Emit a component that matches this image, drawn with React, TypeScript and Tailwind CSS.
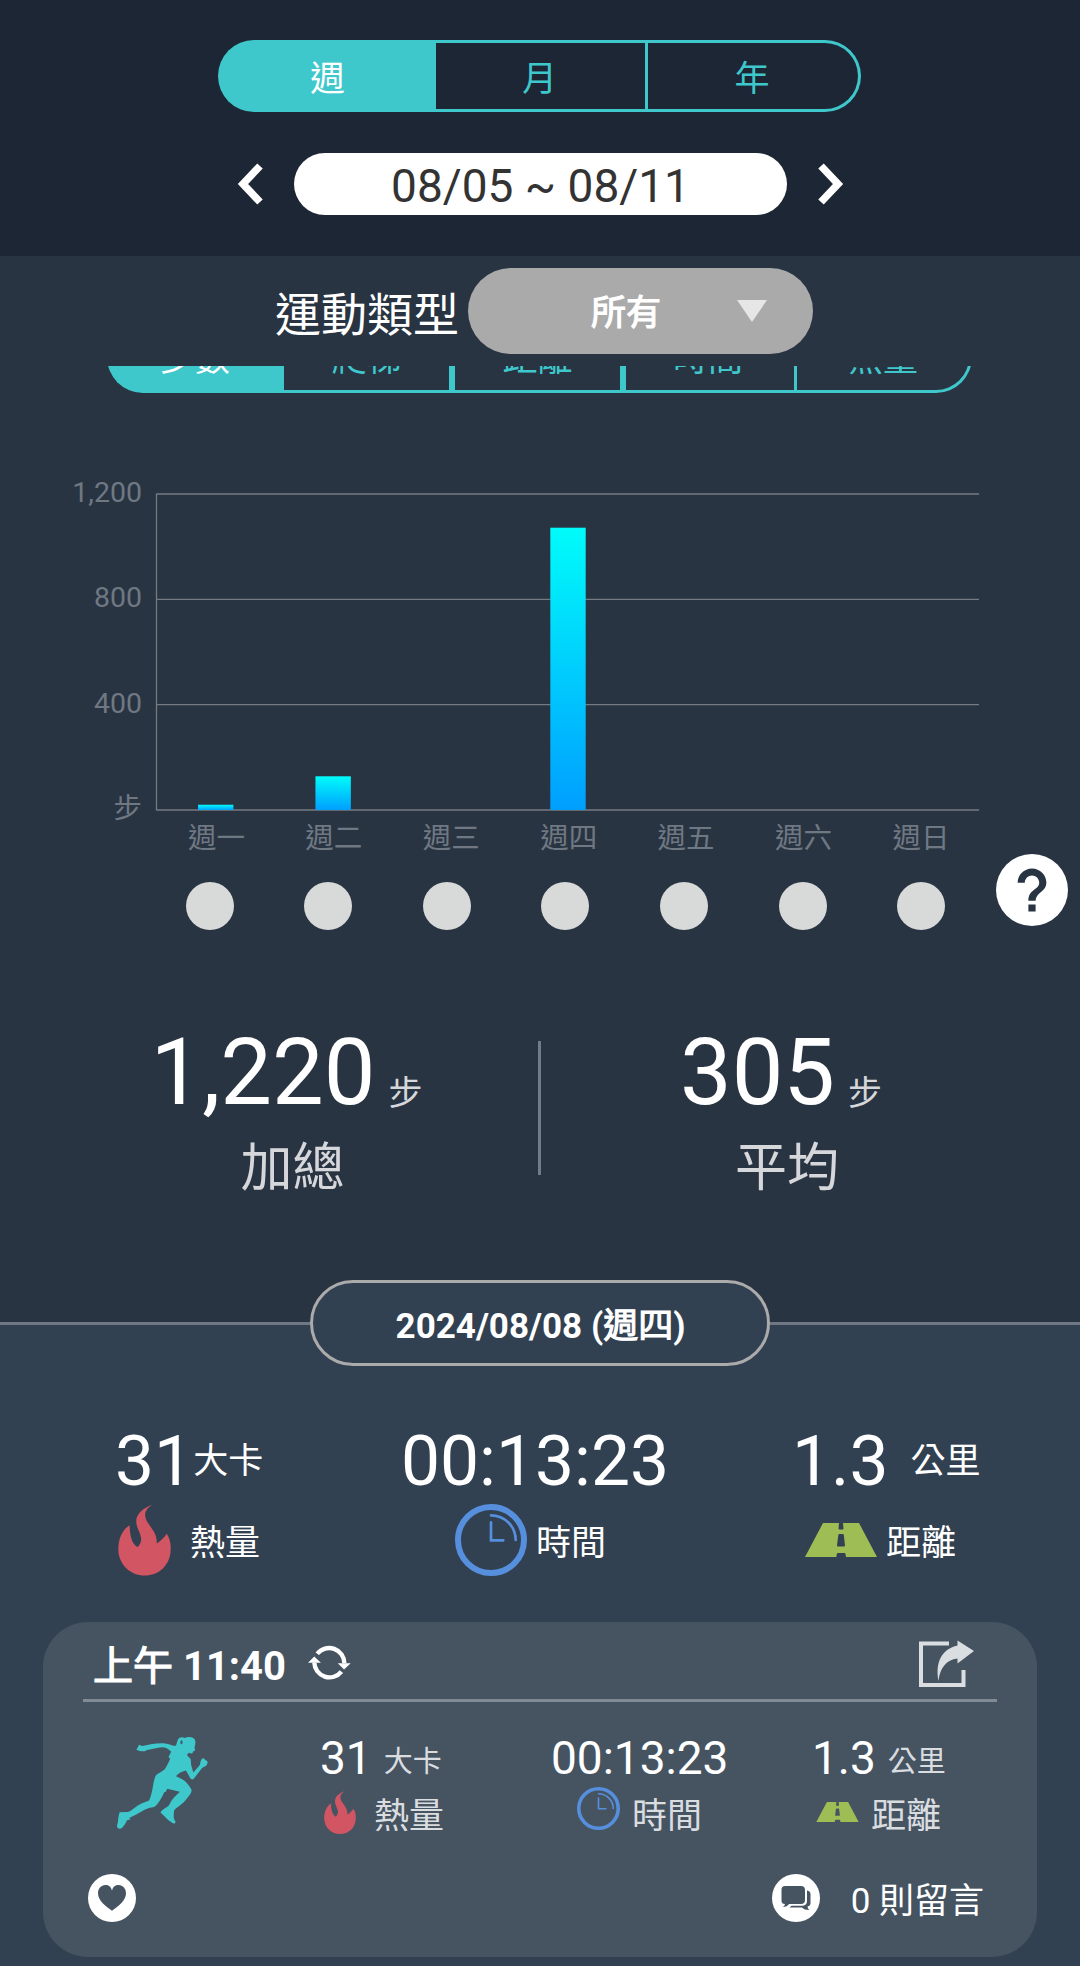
import { useState } from 'react';
import clsx from 'clsx';

const PERIODS = ['週', '月', '年'];
const METRICS = ['步數', '爬梯', '距離', '時間', '熱量'];

const WEEK = [
  { day: '週一', steps: 20 },
  { day: '週二', steps: 128 },
  { day: '週三', steps: 0 },
  { day: '週四', steps: 1072 },
  { day: '週五', steps: 0 },
  { day: '週六', steps: 0 },
  { day: '週日', steps: 0 },
];

const MAX_STEPS = 1200;
const CHART = { left: 157, right: 979, top: 75, bottom: 391 };

function Chevron({ flip }: { flip?: boolean }) {
  return (
    <svg width="26" height="42" viewBox="0 0 26 42" className={clsx('shrink-0', flip && '-scale-x-100')}>
      <path d="M23 3 6 21l17 18" fill="none" stroke="#fff" strokeWidth="7.5" />
    </svg>
  );
}

function FlameIcon({ className }: { className?: string }) {
  return (
    <svg viewBox="114 283 160 215" className={className} fill="#d15563">
      <path d="M218 283C196 292 169 308 169 333C169 355 183 368 184 388C184 398 178 407 173 412C160 404 150 388 149 346C128 358 114 388 115 420C116 465 152 498 194 498C238 498 272 466 273 420C274 400 270 385 261 372C253 385 242 394 231 401C232 380 225 368 213 351C200 333 196 326 196 313C196 302 206 291 218 283Z" />
    </svg>
  );
}

function ClockIcon({ className }: { className?: string }) {
  return (
    <svg viewBox="0 0 216 216" className={className} fill="none" stroke="#568fde" strokeWidth="8" strokeLinecap="round">
      <circle cx="108" cy="108" r="99" strokeWidth="18" />
      <path d="M108 34A74 74 0 0 1 182 108M108 55V109H145" />
    </svg>
  );
}

function RoadIcon({ className }: { className?: string }) {
  return (
    <svg viewBox="0 0 72 34" className={className} fill="#9fbd55" fillRule="evenodd">
      <path d="M18 0H34L33.5 5.5Q33.5 6.5 34.5 6.5H37.5Q38.5 6.5 38.5 5.5L38 0H54L72 34H41L40.5 31Q40.3 30 39.5 30H33Q32 30 31.8 31L31.3 34H0ZM34.5 11Q33.5 11 33.3 12L32 22.5Q32 23.5 33 23.5H39Q40 23.5 40 22.5L38.8 12Q38.6 11 37.6 11Z" />
    </svg>
  );
}

function RunnerIcon() {
  return (
    <svg width="91" height="92" viewBox="262 380 272 275" fill="#3fc8cc" fillRule="evenodd">
      <path d="M320 418L328 403L337 407C362 402 380 398 400 399C415 400 425 406 436 407C441 404 440 396 444 388C448 381 457 379 464 383C474 379 488 379 494 387C499 396 495 405 494 411L495 421L489 423C489 429 484 431 479 427C475 428 471 432 472 435L482 446C484 456 482 463 486 472L490 486C495 481 503 472 510 463C511 454 513 446 518 444C523 443 524 447 526 449L533 453C533 461 529 467 523 469C518 471 516 472 514 476L496 499C493 504 490 507 487 507C483 507 480 502 478 497L468 480C455 483 446 488 438 497C452 502 468 512 475 523C480 530 485 535 485 541C484 549 477 557 470 565C459 579 446 587 436 595C432 599 432 603 432 608C431 618 431 624 437 633C437 638 432 639 429 638L416 629L392 606C394 601 398 598 402 595C410 590 416 588 419 581C424 568 438 556 450 544L412 535L408 544L403 545C399 556 392 567 385 577C380 584 376 588 370 590C356 592 346 596 338 601C325 609 311 616 298 622L303 626L292 629C289 637 282 646 276 653C272 655 266 655 264 652C260 646 263 640 265 634C265 624 267 614 270 605L294 604C301 603 307 597 314 592C327 582 343 575 358 570C365 554 367 540 370 524C372 511 375 502 378 495C386 487 396 484 404 477C412 466 416 456 421 445L416 440L424 424C415 415 407 411 397 411C381 413 367 417 352 419C345 424 335 424 320 418ZM453 391C450 396 452 402 456 402C458 398 459 393 456 390Z" />
    </svg>
  );
}

function SyncIcon() {
  return (
    <svg width="43" height="36" viewBox="834 105 130 108" fill="none" stroke="#fff" strokeWidth="13">
      <path d="M862 131A46 46 0 0 1 944 160M935 185A46 46 0 0 1 853 158" />
      <path d="M924 160H963L943 179ZM834 158H873L853 139Z" fill="#fff" stroke="none" />
    </svg>
  );
}

function ShareIcon() {
  return (
    <svg width="56" height="48" viewBox="919 1640 56 48">
      <path d="M949 1643.5H921V1685H963.5V1670" fill="none" stroke="#dadee0" strokeWidth="4" />
      <path
        d="M957.5 1640.5L974 1651L957.5 1663.5V1658.5C946 1660 940 1668 938.5 1681C935 1662 942 1649 957.5 1645.5Z"
        fill="#dadee0"
      />
    </svg>
  );
}

function HeartBadge() {
  return (
    <svg width="48" height="48" viewBox="174 792 144 144">
      <circle cx="246" cy="864" r="72" fill="#fff" />
      <path
        d="M246 902C228 890 204 872 204 850C204 836 213 825 226 825C236 825 243 830 246 842C249 830 256 825 266 825C279 825 288 836 288 850C288 872 264 890 246 902Z"
        fill="#465462"
      />
    </svg>
  );
}

function CommentBadge() {
  return (
    <svg width="48" height="48" viewBox="0 0 48 48">
      <circle cx="24" cy="24" r="24" fill="#fff" />
      <path
        d="M13 12H29Q33 12 33 16V26Q33 30 29 30H17Q15 33 11 33Q13 31.500 13 30Q9.500 30 9.500 26.500V15.500Q9.500 12 13 12Z"
        fill="#465462"
      />
      <path
        d="M35 16.500Q38.500 17 38.500 20V29Q38.500 32 35.500 32.500Q35.500 34.500 37.500 36Q32 36 30 33.500H17.500L19.500 31.800H30Q35 31.800 35 27Z"
        fill="#465462"
      />
    </svg>
  );
}

function WeekChart() {
  const slot = (CHART.right - CHART.left) / WEEK.length;
  const scale = (CHART.bottom - CHART.top) / MAX_STEPS;
  const toY = (value: number) => CHART.bottom - value * scale;

  return (
    <svg width="1080" height="444" viewBox="0 0 1080 444" fontSize="28.5" fill="#6f7882">
      <defs>
        <linearGradient id="bar" x1="0" y1="0" x2="0" y2="1">
          <stop offset="0" stopColor="#00fcfa" />
          <stop offset="1" stopColor="#009fff" />
        </linearGradient>
      </defs>
      {[1200, 800, 400, 0].map((v) => (
        <g key={v}>
          <line x1="156" x2={CHART.right} y1={toY(v)} y2={toY(v)} stroke="#757a80" strokeWidth="1.3" />
          <text x="142" y={v ? toY(v) + 8 : 399} textAnchor="end">
            {v ? v.toLocaleString('en-US') : '步'}
          </text>
        </g>
      ))}
      <line x1="156.500" x2="156.500" y1={CHART.top} y2={CHART.bottom} stroke="#757a80" strokeWidth="1.3" />
      {WEEK.map((d, i) => {
        const center = CHART.left + slot * (i + 0.5);
        return (
          <g key={d.day}>
            {d.steps > 0 && (
              <rect x={center - 17.700} y={toY(d.steps)} width="35.400" height={d.steps * scale} fill="url(#bar)" />
            )}
            <text x={center + 0.7} y="429" textAnchor="middle">
              {d.day}
            </text>
          </g>
        );
      })}
    </svg>
  );
}

function Total({ value, label }: { value: string; label: string }) {
  return (
    <div className="flex flex-col items-center">
      <div className="flex h-[92px] items-baseline leading-[92px]">
        <span className="text-[92px]">{value}</span>
        <span className="relative top-px ml-[13px] text-[34px] text-[#d6d7da]">步</span>
      </div>
      <span className="mt-6 ml-3 text-[52px] leading-[52px] text-[#d6d7da]">{label}</span>
    </div>
  );
}

export default function App() {
  const [period, setPeriod] = useState(0);
  const [metric, setMetric] = useState(0);

  return (
    <div className="h-[1966px] w-[1080px] overflow-hidden bg-[#293442] font-[Roboto,'Noto_Sans_CJK_TC',sans-serif] whitespace-nowrap text-white">
      {/* Period + date range */}
      <header className="h-64 bg-[#1d2634] pt-10">
        <div className="ml-[218px] flex h-[72px] w-[643px] text-[35px]">
          {PERIODS.map((p, i) => (
            <button
              key={p}
              onClick={() => setPeriod(i)}
              className={clsx(
                'border-y-[3px] border-[#3fc8cc] pt-[7px] leading-[59px]',
                i === 0 && 'w-[218px] rounded-l-full border-l-[3px] pr-0.5',
                i === 1 && 'w-[212px] border-r-[3px] pr-0.5',
                i === 2 && 'w-[213px] rounded-r-full border-r-[3px] pr-0.5',
                period === i ? 'bg-[#3fc8cc] text-white' : 'text-[#3fc8cc]',
              )}
            >
              {p}
            </button>
          ))}
        </div>
        <div className="mt-[41px] flex items-center pl-[237px]">
          <button>
            <Chevron />
          </button>
          <div className="ml-[31px] h-[62px] w-[493px] rounded-full bg-white pt-[3px] text-center text-[46px] leading-[60px] text-[#333]">
            08/05 ~ 08/11
          </div>
          <button className="ml-[31px]">
            <Chevron flip />
          </button>
        </div>
      </header>

      {/* Exercise type filter */}
      <div className="flex h-[110px] pt-3 pl-[275px]">
        <span className="w-[193px] pt-1 text-[46px] leading-[86px]">運動類型</span>
        <button className="flex h-[86px] w-[345px] items-center rounded-full bg-[#aaa] pl-[123px]">
          <span className="pt-1.5 text-[35px] [-webkit-text-stroke:1.1px_#fff]">所有</span>
          <svg width="30" height="22" viewBox="0 0 30 22" className="ml-[76px]">
            <path d="M0 0H30L15 22Z" fill="#e6e6e6" />
          </svg>
        </button>
      </div>

      {/* Metric tabs, scrolled halfway under the filter bar */}
      <div className="flex h-[27px] items-end overflow-hidden pl-[107px]">
        <div className="flex h-[72px] w-[865px] shrink-0 text-[35px]">
          {METRICS.map((m, i) => (
            <button
              key={m}
              onClick={() => setMetric(i)}
              className={clsx(
                'border-y-[3px] border-[#3fc8cc] pt-[5px] leading-[61px]',
                i === 0 && 'w-[177px] rounded-l-full border-l-[3px] pr-1',
                i === 1 && 'w-[171px] border-r-[6px]',
                i === 2 && 'w-[171px] border-r-[6px]',
                i === 3 && 'w-[171px] border-r-[3px] pr-1',
                i === 4 && 'w-[175px] rounded-r-full border-r-[3px]',
                metric === i ? 'bg-[#3fc8cc]' : 'text-[#3fc8cc]',
              )}
            >
              {m}
            </button>
          ))}
        </div>
      </div>

      <div className="relative mt-[26px] h-[608px]">
        <WeekChart />
        <div className="mt-[19px] ml-[185.500px] flex w-[760px] justify-between">
          {WEEK.map((d) => (
            <span key={d.day} className="size-12 rounded-full bg-[#d8dad9]" />
          ))}
        </div>
        <button className="absolute top-[435px] left-[996px]">
          <svg width="72" height="72" viewBox="2 2 20 20">
            <circle cx="12" cy="12" r="10" fill="#fff" />
            <path
              d="M11 18h2v-2h-2v2zm1-12c-2.210 0-4 1.790-4 4h2c0-1.100.9-2 2-2s2 .9 2 2c0 2-3 1.750-3 5h2c0-2.250 3-2.500 3-5 0-2.210-1.790-4-4-4z"
              fill="#293442"
            />
          </svg>
        </button>
      </div>

      {/* Weekly totals */}
      <div className="flex h-[253px]">
        <div className="flex w-[538px] justify-center pl-[35px]">
          <Total value="1,220" label="加總" />
        </div>
        <div className="mt-3.5 h-[134px] w-[3px] bg-[#727b87]" />
        <div className="flex flex-1 justify-center pr-[59px]">
          <Total value="305" label="平均" />
        </div>
      </div>

      {/* Selected day */}
      <section className="h-[686px] bg-[linear-gradient(#293442_42px,#324151_42px)]">
        <div className="flex h-[86px] items-center">
          <div className="h-[3px] flex-1 bg-[#6f7784]" />
          <div className="h-[86px] w-[460px] rounded-full border-[3px] border-[#ababab] bg-[#324151] pt-1 pl-px text-center text-[35px] leading-[80px] font-bold">
            2024/08/08 (<span className="font-normal [-webkit-text-stroke:1.1px_#fff]">週四</span>)
          </div>
          <div className="h-[3px] flex-1 bg-[#6f7784]" />
        </div>

        <div className="mt-[61px] flex h-[70px] items-center text-[35px] leading-[70px]">
          <div className="flex w-[401px] pl-[115px]">
            <span className="text-[69.5px]">31</span>
            <span>大卡</span>
          </div>
          <span className="w-[391px] text-[69.5px]">00:13:23</span>
          <span className="text-[69.5px]">1.3</span>
          <span className="ml-[22px]">公里</span>
        </div>
        <div className="mt-[7px] flex h-[72px] items-center text-[35px]">
          <div className="flex w-[455px] items-center pl-[118px]">
            <FlameIcon className="h-[72px] w-[53px]" />
            <span className="ml-[19px] pt-2">熱量</span>
          </div>
          <div className="flex w-[350px] items-center">
            <ClockIcon className="size-[72px]" />
            <span className="ml-[9px] pt-2">時間</span>
          </div>
          <RoadIcon className="h-[34px] w-[72px]" />
          <span className="ml-[9px] pt-2">距離</span>
        </div>

        {/* Activity record */}
        <article className="mt-[46px] ml-[43px] h-[335px] w-[994px] rounded-[45px] bg-[#465462]">
          <div className="mx-10 flex h-20 items-center border-b-[3px] border-[#808b93] pl-[10px]">
            <span className="pt-3 text-[40px] leading-[60px] font-bold">
              <span className="font-normal [-webkit-text-stroke:1.2px_#fff]">上午</span> 11:40
            </span>
            <button className="mt-[5px] ml-[22px]">
              <SyncIcon />
            </button>
            <button className="mt-1.5 mr-[22px] ml-auto">
              <ShareIcon />
            </button>
          </div>

          <div className="flex h-[172px] pl-[74px]">
            <div className="w-[203px] pt-[35px]">
              <RunnerIcon />
            </div>
            <div className="w-[231px]">
              <div className="mt-[33px] flex h-[46px] items-center">
                <span className="text-[46px]">31</span>
                <span className="ml-3 pt-[9px] text-[29px] text-[#dadde0]">大卡</span>
              </div>
              <div className="mt-[10px] flex h-[43px] items-center pl-[4px]">
                <FlameIcon className="h-[43px] w-8" />
                <span className="ml-[18px] pt-[10px] text-[35px] text-[#dadde0]">熱量</span>
              </div>
            </div>
            <div className="w-[261px]">
              <div className="mt-[33px] flex h-[46px] items-center text-[46px]">00:13:23</div>
              <div className="mt-[6px] flex h-[43px] items-center pl-[26px]">
                <ClockIcon className="size-[43px]" />
                <span className="ml-3 pt-[18px] text-[35px] text-[#dadde0]">時間</span>
              </div>
            </div>
            <div>
              <div className="mt-[33px] flex h-[46px] items-center">
                <span className="text-[46px]">1.3</span>
                <span className="ml-3 pt-[9px] text-[29px] text-[#dadde0]">公里</span>
              </div>
              <div className="mt-[9px] flex h-[43px] items-center pl-[4px]">
                <RoadIcon className="h-5 w-[43px]" />
                <span className="ml-3 pt-3 text-[35px] text-[#dadde0]">距離</span>
              </div>
            </div>
          </div>

          <div className="flex h-12 items-center pr-[53px] pl-[45px]">
            <button>
              <HeartBadge />
            </button>
            <button className="ml-auto">
              <CommentBadge />
            </button>
            <span className="ml-[31px] pt-2 text-[35px]">0 則留言</span>
          </div>
        </article>
      </section>
    </div>
  );
}
